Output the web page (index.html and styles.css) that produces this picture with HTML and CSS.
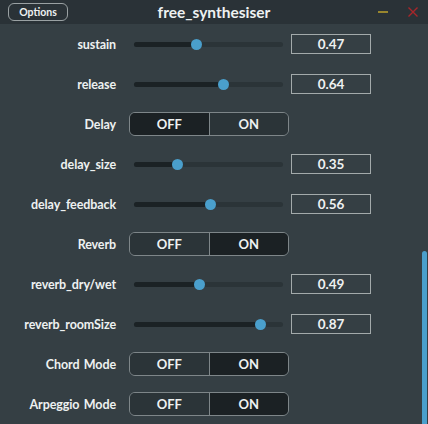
FILE: index.html
```html
<!DOCTYPE html>
<html>
<head>
<meta charset="utf-8">
<link rel="stylesheet" href="styles.css">
</head>
<body>
<div class="window">
  <header class="titlebar">
    <button class="options">Options</button>
    <div class="title">free_synthesiser</div>
    <div class="winbtns">
      <svg class="minimize" width="12" height="12" viewBox="0 0 12 12"><line x1="1" y1="6" x2="11" y2="6" stroke="#b49b2c" stroke-width="1.6"/></svg>
      <svg class="close" width="12" height="12" viewBox="0 0 12 12"><path d="M1.5 1.5 L10.5 10.5 M10.5 1.5 L1.5 10.5" stroke="#a8262a" stroke-width="1.4"/></svg>
    </div>
  </header>
  <main class="content">
    <div class="row"><div class="label">sustain</div><div class="slider"><div class="track"><div class="fill" style="width:62px"></div><div class="thumb" style="left:62px"></div></div></div><div class="value">0.47</div></div>
    <div class="row"><div class="label">release</div><div class="slider"><div class="track"><div class="fill" style="width:89px"></div><div class="thumb" style="left:89px"></div></div></div><div class="value">0.64</div></div>
    <div class="row"><div class="label">Delay</div><div class="toggle"><div class="seg sel">OFF</div><div class="seg">ON</div></div></div>
    <div class="row"><div class="label">delay_size</div><div class="slider"><div class="track"><div class="fill" style="width:43px"></div><div class="thumb" style="left:43px"></div></div></div><div class="value">0.35</div></div>
    <div class="row"><div class="label">delay_feedback</div><div class="slider"><div class="track"><div class="fill" style="width:76px"></div><div class="thumb" style="left:76px"></div></div></div><div class="value">0.56</div></div>
    <div class="row"><div class="label">Reverb</div><div class="toggle"><div class="seg">OFF</div><div class="seg sel">ON</div></div></div>
    <div class="row"><div class="label">reverb_dry/wet</div><div class="slider"><div class="track"><div class="fill" style="width:65px"></div><div class="thumb" style="left:65px"></div></div></div><div class="value">0.49</div></div>
    <div class="row"><div class="label">reverb_roomSize</div><div class="slider"><div class="track"><div class="fill" style="width:126px"></div><div class="thumb" style="left:126px"></div></div></div><div class="value">0.87</div></div>
    <div class="row"><div class="label">Chord Mode</div><div class="toggle"><div class="seg">OFF</div><div class="seg sel">ON</div></div></div>
    <div class="row"><div class="label">Arpeggio Mode</div><div class="toggle"><div class="seg">OFF</div><div class="seg sel">ON</div></div></div>
    <div class="scrollbar"></div>
  </main>
</div>
</body>
</html>
```
FILE: styles.css
```css
html, body {
  margin: 0;
  padding: 0;
  background: #353f44;
  width: 428px;
  height: 424px;
  overflow: hidden;
}
.window {
  font-family: "Lato", "Open Sans", sans-serif;
  color: #eef1f1;
}
.titlebar {
  height: 24px;
  background: #2a3237;
  display: flex;
  align-items: center;
  position: relative;
}
.options {
  margin-left: 8px;
  width: 60px;
  height: 18px;
  box-sizing: border-box;
  border: 1px solid #9aa1a3;
  border-radius: 6px;
  background: #2a3237;
  color: #eef1f1;
  font-family: "Lato", sans-serif;
  font-weight: 700;
  font-size: 10.5px;
  padding: 0;
  line-height: 16px;
}
.title {
  position: absolute;
  left: 0;
  right: 0;
  top: 0;
  text-align: center;
  font-weight: 700;
  font-size: 15.5px;
  line-height: 24px;
  pointer-events: none;
}
.winbtns {
  margin-left: auto;
  margin-right: 9px;
  display: flex;
  gap: 18px;
  align-items: center;
}
.winbtns svg { display: block; }
.content {
  position: relative;
  height: 400px;
}
.row {
  height: 40px;
  display: flex;
  align-items: center;
}
.label {
  width: 116px;
  text-align: right;
  font-weight: 700;
  font-size: 12.5px;
  letter-spacing: -0.1px;
  word-spacing: 1.5px;
  flex: none;
}
.slider {
  margin-left: 18px;
  width: 149px;
  height: 12px;
  display: flex;
  align-items: center;
}
.track {
  position: relative;
  width: 149px;
  height: 5px;
  border-radius: 3px;
  background: #2b3438;
}
.fill {
  height: 5px;
  border-radius: 3px;
  background: #1b2225;
}
.thumb {
  position: absolute;
  top: -3px;
  width: 11px;
  height: 11px;
  margin-left: -5.5px;
  border-radius: 50%;
  background: #4a9fcc;
}
.value {
  margin-left: 8px;
  width: 80px;
  height: 20px;
  box-sizing: border-box;
  border: 1px solid #a3aaab;
  text-align: center;
  font-weight: 700;
  font-size: 13.5px;
  line-height: 18px;
}
.toggle {
  margin-left: 13px;
  width: 160px;
  height: 24px;
  box-sizing: border-box;
  border: 1px solid #7e8689;
  border-radius: 6px;
  display: flex;
  overflow: hidden;
}
.seg {
  flex: 1;
  text-align: center;
  font-weight: 700;
  font-size: 13px;
  line-height: 22px;
  background: #2b3438;
}
.seg + .seg {
  border-left: 1px solid #7e8689;
}
.seg.sel {
  background: #1b2124;
}
.scrollbar {
  position: absolute;
  right: 1px;
  top: 227px;
  width: 5px;
  height: 176px;
  border-radius: 3px;
  background: #4a9fcc;
}
```
